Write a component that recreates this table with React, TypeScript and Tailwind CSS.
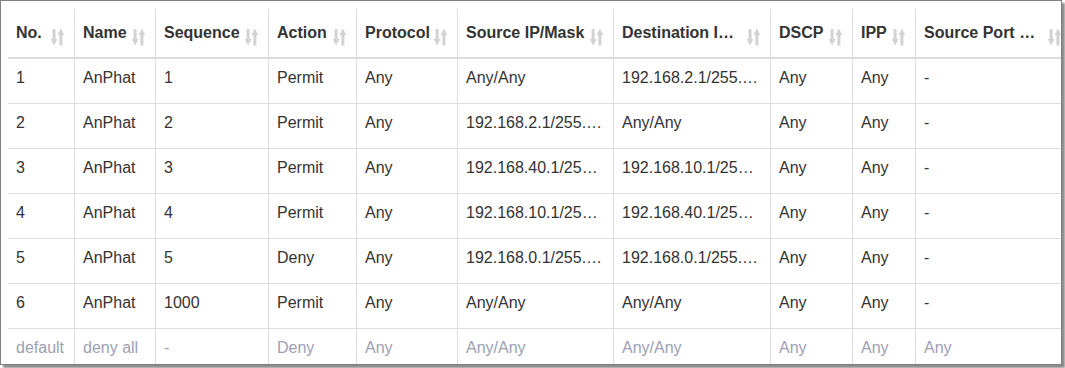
import React from "react";

type Row = string[];

const COLUMNS = [
  {title: "No.", w: "w-[66px]"},
  {title: "Name", w: "w-[81px]"},
  {title: "Sequence", w: "w-[113px]"},
  {title: "Action", w: "w-[88px]"},
  {title: "Protocol", w: "w-[101px]"},
  {title: "Source IP/Mask", w: "w-[156px]"},
  {title: "Destination IP/Mask", w: "w-[157px]"},
  {title: "DSCP", w: "w-[82px]"},
  {title: "IPP", w: "w-[63px]"},
  {title: "Source Port Range", w: "w-[156px]"},
  {title: "Destination Port Range", w: "w-[156px]"},
];

const ROWS: Row[] = [
  ["1", "AnPhat", "1", "Permit", "Any", "Any/Any", "192.168.2.1/255.255.255.255", "Any", "Any", "-", "-"],
  ["2", "AnPhat", "2", "Permit", "Any", "192.168.2.1/255.255.255.255", "Any/Any", "Any", "Any", "-", "-"],
  ["3", "AnPhat", "3", "Permit", "Any", "192.168.40.1/255.255.255.0", "192.168.10.1/255.255.255.0", "Any", "Any", "-", "-"],
  ["4", "AnPhat", "4", "Permit", "Any", "192.168.10.1/255.255.255.0", "192.168.40.1/255.255.255.0", "Any", "Any", "-", "-"],
  ["5", "AnPhat", "5", "Deny", "Any", "192.168.0.1/255.255.255.0", "192.168.0.1/255.255.255.0", "Any", "Any", "-", "-"],
  ["6", "AnPhat", "1000", "Permit", "Any", "Any/Any", "Any/Any", "Any", "Any", "-", "-"],
];

const DEFAULT_ROW: Row = ["default", "deny all", "-", "Deny", "Any", "Any/Any", "Any/Any", "Any", "Any", "Any", "Any"];

// down arrow on the left, up arrow on the right
function SortIcon() {
  return (
      <svg width="13" height="18" viewBox="0 0 13 18" fill="#d2d2d2" className="shrink-0 mt-[8px] mr-[10px]">
        <rect x="1.6" y="1" width="3" height="12"/>
        <path d="M-0.3 11 L6.5 11 L3.1 17.5 Z"/>
        <rect x="8.4" y="5" width="3" height="12.5"/>
        <path d="M6.5 7 L13.3 7 L9.9 0.5 Z"/>
      </svg>
  );
}

function BodyRow({row, muted}: { row: Row; muted?: boolean }) {
  return (
      <div className="flex h-[45px] border-b border-[#dddddd]">
        {row.map((cell, i) => (
            <div key={i}
                 className={`${COLUMNS[i].w} shrink-0 px-[8px] pt-[9px] leading-[20px] truncate ${i > 0 ? "border-l border-[#dddddd]" : ""} ${muted ? "text-[#9e9eb5]" : "text-[#333333]"}`}>
              {cell}
            </div>
        ))}
      </div>
  );
}

export default function App() {
  return (
      <div className="w-[1065px] h-[368px] bg-white">
        <div
            className="w-[1062px] h-[365px] border border-[#808080] overflow-hidden shadow-[3px_3px_2px_rgba(0,0,0,0.45)]"
            style={{fontFamily: '"Liberation Sans", Arial, sans-serif'}}>
          <div className="pl-[7px] pt-[8px] text-[16px]">
            <div className="flex h-[50px] border-b-2 border-[#dddddd]">
              {COLUMNS.map((col, i) => (
                  <div key={col.title}
                       className={`${col.w} shrink-0 flex items-center pl-[8px] ${i > 0 ? "border-l border-[#dddddd]" : ""}`}>
                    <div className="flex-1 min-w-0 truncate font-bold text-[#333333] pr-[4px]">
                      {col.title}
                    </div>
                    <SortIcon/>
                  </div>
              ))}
            </div>
            {ROWS.map((row) => (
                <BodyRow key={row[0]} row={row}/>
            ))}
            <BodyRow row={DEFAULT_ROW} muted/>
          </div>
        </div>
      </div>
  );
}
